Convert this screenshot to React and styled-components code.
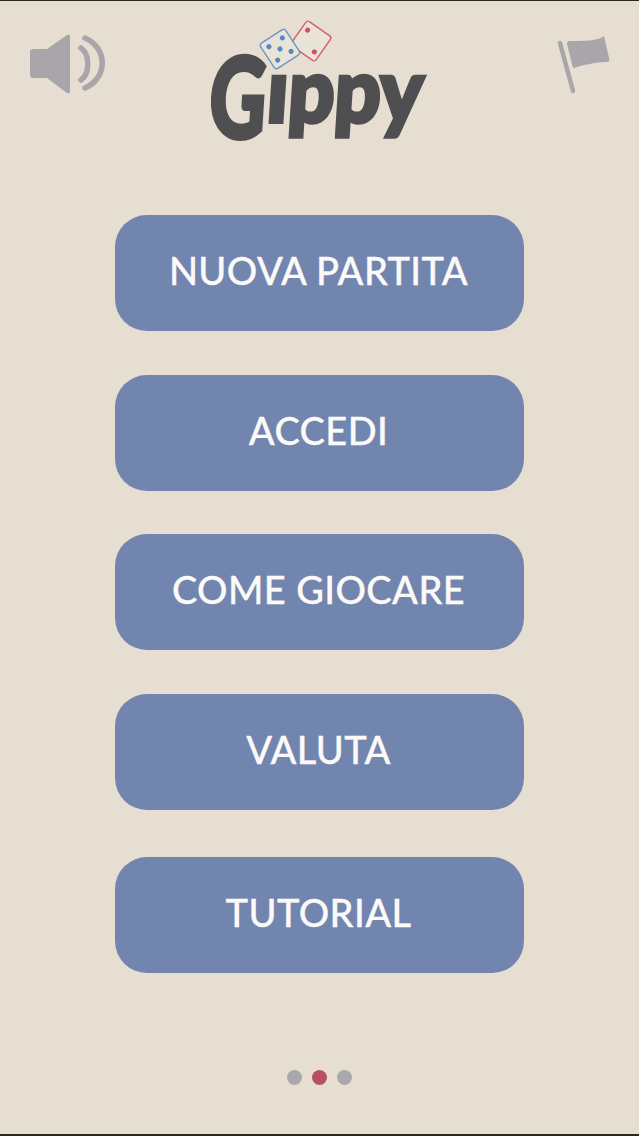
import React from "react"
import styled, { createGlobalStyle } from "styled-components"

const menu = [
    { label: "NUOVA PARTITA", gap: 44 },
    { label: "ACCEDI", gap: 43 },
    { label: "COME GIOCARE", gap: 44 },
    { label: "VALUTA", gap: 47 },
    { label: "TUTORIAL", gap: 0 },
]

const SoundIcon = () => (
    <svg width="80" height="62" viewBox="0 0 80 62">
        <path
            d="M5 16h14L39 2c2-1 3 0 3 2v54c0 2-1 3-3 2L19 45H5c-2 0-3-1-3-3V19c0-2 1-3 3-3z"
            fill="#a8a5ab"
        />
        <path
            d="M53 15c9 6 9 26 0 32M57 5c23 10 23 40 0 50"
            fill="none"
            stroke="#a8a5ab"
            strokeWidth="5.5"
            strokeLinecap="round"
        />
    </svg>
)

const FlagIcon = () => (
    <svg width="56" height="62" viewBox="0 0 56 62">
        <path d="M4 10l13 48" stroke="#a8a5ab" strokeWidth="4.5" strokeLinecap="round" />
        <path
            d="M11 11c0-2 1-3 3-3 10 0 20 0 28-2 3-1 5-2 6-3l5 22c1 3 0 4-3 4-10 0-22 3-33 6z"
            fill="#a8a5ab"
        />
    </svg>
)

const Dice = () => (
    <svg width="76" height="52" viewBox="0 0 76 52">
        <g transform="translate(54 23) rotate(35)">
            <rect x="-15" y="-15" width="30" height="30" rx="3" fill="#e9e3d8" stroke="#d4606d" strokeWidth="1.4" />
            <circle cx="-9" cy="-7" r="2.5" fill="#d4505f" />
            <circle cx="9" cy="7" r="2.5" fill="#d4505f" />
        </g>
        <g transform="translate(23 31) rotate(-33)">
            <rect x="-15" y="-15" width="30" height="30" rx="3" fill="#e9e3d8" stroke="#6f93c8" strokeWidth="1.4" />
            <circle cx="-8" cy="-8" r="2.5" fill="#5588c4" />
            <circle cx="8" cy="-8" r="2.5" fill="#5588c4" />
            <circle cx="0" cy="0" r="2.5" fill="#5588c4" />
            <circle cx="-8" cy="8" r="2.5" fill="#5588c4" />
            <circle cx="8" cy="8" r="2.5" fill="#5588c4" />
        </g>
    </svg>
)

const App = () => {
    return (
        <>
            <GlobalStyle />
            <Screen>
                <Header>
                    <IconSlot side="start">
                        <SoundIcon />
                    </IconSlot>
                    <Logo>
                        <LogoText>
                            <LogoCap>G</LogoCap>
                            <LogoRest>ıppy</LogoRest>
                        </LogoText>
                        <DiceSlot>
                            <Dice />
                        </DiceSlot>
                    </Logo>
                    <IconSlot side="end">
                        <FlagIcon />
                    </IconSlot>
                </Header>
                <Menu>
                    {menu.map(item => (
                        <MenuButton key={item.label} $gap={item.gap}>
                            {item.label}
                        </MenuButton>
                    ))}
                </Menu>
                <Pager>
                    <Dot />
                    <Dot $active />
                    <Dot />
                </Pager>
            </Screen>
        </>
    )
}

export default App

const GlobalStyle = createGlobalStyle`
    body {
        margin: 0;
        background: #e6dfd1;
    }
`

const Screen = styled.div`
    display: flex;
    flex-direction: column;
    box-sizing: border-box;
    height: 1136px;
    background: #e6dfd1;
    border-top: 1px solid #2b2622;
    border-bottom: 2px solid #2b2622;
    overflow: hidden;
    font-family: "Lato", "Liberation Sans", sans-serif;
`

const Header = styled.header`
    display: grid;
    grid-template-columns: 1fr auto 1fr;
    align-items: start;
    height: 214px;
    padding: 32px 27px 0 28px;
    box-sizing: border-box;
`

const IconSlot = styled.div`
    justify-self: ${props => props.side};
    line-height: 0;
`

const Logo = styled.div`
    position: relative;
    width: 218px;
    margin-top: 3px;
`

const DiceSlot = styled.div`
    position: absolute;
    top: -18px;
    left: 46px;
    line-height: 0;
`

const LogoText = styled.div`
    display: flex;
    align-items: flex-start;
    height: 100px;
    font-weight: 900;
    color: #4f4f51;
    white-space: nowrap;
    -webkit-text-stroke: 4px #4f4f51;
`

const LogoCap = styled.span`
    font-size: 112px;
    line-height: 100px;
    width: 56px;
    transform-origin: left top;
    transform: translate(2px, 9px) scaleX(0.7) skewX(-5deg);
`

const LogoRest = styled.span`
    font-size: 88px;
    line-height: 100px;
    letter-spacing: 0;
    transform-origin: left top;
    transform: translate(4px, 2px) scaleX(0.92) skewX(-4deg);
`

const Menu = styled.nav`
    display: flex;
    flex-direction: column;
    align-items: center;
`

const MenuButton = styled.button`
    width: 409px;
    height: 116px;
    margin-bottom: ${props => props.$gap}px;
    border: 0;
    border-radius: 32px;
    background: #7285ae;
    color: #fbfaf8;
    font-family: inherit;
    font-weight: 500;
    font-size: 38px;
    letter-spacing: 0.4px;
    -webkit-text-stroke: 0.3px #fbfaf8;
    padding: 0 2px 7px 0;
`

const Pager = styled.div`
    display: flex;
    justify-content: center;
    gap: 10px;
    margin-top: 97px;
`

const Dot = styled.span`
    width: 15px;
    height: 15px;
    border-radius: 50%;
    background: ${props => (props.$active ? "#b9505f" : "#a9a9ab")};
`
